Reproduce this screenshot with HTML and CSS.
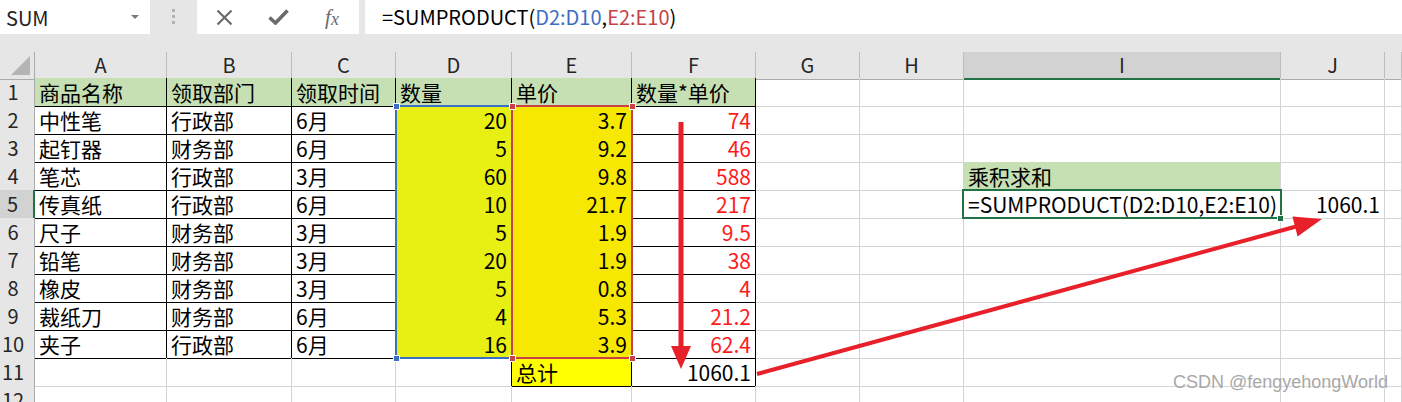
FILE: index.html
```html
<!DOCTYPE html>
<html lang="zh-CN">
<head>
    <meta charset="UTF-8">
    <title>SUMPRODUCT</title>
    <link rel="stylesheet" href="styles.css">
</head>
<body>
    <!-- Formula bar -->
    <div class="formula-bar">
        <div class="name-box"><span>SUM</span><span class="caret"></span></div>
        <div class="grip">
            <svg width="4" height="16" viewBox="0 0 4 16"><rect x="0" y="0" width="3" height="3" fill="#b3b3b3"/><rect x="0" y="6" width="3" height="3" fill="#b3b3b3"/><rect x="0" y="12" width="3" height="3" fill="#b3b3b3"/></svg>
        </div>
        <div class="fx-buttons">
            <span class="btn"><svg width="17" height="17" viewBox="0 0 17 17"><path d="M1.5 1.5L15.5 15.5M15.5 1.5L1.5 15.5" stroke="#6b6b6b" stroke-width="2.2" fill="none"/></svg></span>
            <span class="btn"><svg width="21" height="16" viewBox="0 0 21 16"><path d="M1.5 8.5L7.5 14L19.5 1.5" stroke="#6b6b6b" stroke-width="3.6" fill="none"/></svg></span>
            <span class="btn fx">f<span class="fx-x">x</span></span>
        </div>
        <div class="formula-input">=SUMPRODUCT(<span class="ref-d">D2:D10</span>,<span class="ref-e">E2:E10</span>)</div>
    </div>

    <!-- Sheet -->
    <div class="sheet">
        <div class="row head-row">
            <div class="corner"></div>
            <div class="col-head">A</div><div class="col-head">B</div><div class="col-head">C</div>
            <div class="col-head">D</div><div class="col-head">E</div><div class="col-head">F</div>
            <div class="col-head">G</div><div class="col-head">H</div><div class="col-head active">I</div>
            <div class="col-head">J</div><div class="col-head"></div>
        </div>

        <div class="row">
            <div class="row-head">1</div>
            <div class="cell green b">商品名称</div><div class="cell green b">领取部门</div><div class="cell green b">领取时间</div>
            <div class="cell green b">数量</div><div class="cell green b">单价</div><div class="cell green b">数量*单价</div>
            <div class="cell"></div><div class="cell"></div><div class="cell"></div><div class="cell"></div><div class="cell"></div>
        </div>
        <div class="row">
            <div class="row-head">2</div>
            <div class="cell b">中性笔</div><div class="cell b">行政部</div><div class="cell b">6月</div>
            <div class="cell qty b num">20</div><div class="cell price b num">3.7</div><div class="cell b num red">74</div>
            <div class="cell"></div><div class="cell"></div><div class="cell"></div><div class="cell"></div><div class="cell"></div>
        </div>
        <div class="row">
            <div class="row-head">3</div>
            <div class="cell b">起钉器</div><div class="cell b">财务部</div><div class="cell b">6月</div>
            <div class="cell qty b num">5</div><div class="cell price b num">9.2</div><div class="cell b num red">46</div>
            <div class="cell"></div><div class="cell"></div><div class="cell"></div><div class="cell"></div><div class="cell"></div>
        </div>
        <div class="row">
            <div class="row-head">4</div>
            <div class="cell b">笔芯</div><div class="cell b">行政部</div><div class="cell b">3月</div>
            <div class="cell qty b num">60</div><div class="cell price b num">9.8</div><div class="cell b num red">588</div>
            <div class="cell"></div><div class="cell"></div><div class="cell green">乘积求和</div><div class="cell"></div><div class="cell"></div>
        </div>
        <div class="row">
            <div class="row-head active">5</div>
            <div class="cell b">传真纸</div><div class="cell b">行政部</div><div class="cell b">6月</div>
            <div class="cell qty b num">10</div><div class="cell price b num">21.7</div><div class="cell b num red">217</div>
            <div class="cell"></div><div class="cell"></div><div class="cell formula">=SUMPRODUCT(D2:D10,E2:E10)</div><div class="cell num">1060.1</div><div class="cell"></div>
        </div>
        <div class="row">
            <div class="row-head">6</div>
            <div class="cell b">尺子</div><div class="cell b">财务部</div><div class="cell b">3月</div>
            <div class="cell qty b num">5</div><div class="cell price b num">1.9</div><div class="cell b num red">9.5</div>
            <div class="cell"></div><div class="cell"></div><div class="cell"></div><div class="cell"></div><div class="cell"></div>
        </div>
        <div class="row">
            <div class="row-head">7</div>
            <div class="cell b">铅笔</div><div class="cell b">财务部</div><div class="cell b">3月</div>
            <div class="cell qty b num">20</div><div class="cell price b num">1.9</div><div class="cell b num red">38</div>
            <div class="cell"></div><div class="cell"></div><div class="cell"></div><div class="cell"></div><div class="cell"></div>
        </div>
        <div class="row">
            <div class="row-head">8</div>
            <div class="cell b">橡皮</div><div class="cell b">财务部</div><div class="cell b">3月</div>
            <div class="cell qty b num">5</div><div class="cell price b num">0.8</div><div class="cell b num red">4</div>
            <div class="cell"></div><div class="cell"></div><div class="cell"></div><div class="cell"></div><div class="cell"></div>
        </div>
        <div class="row">
            <div class="row-head">9</div>
            <div class="cell b">裁纸刀</div><div class="cell b">财务部</div><div class="cell b">6月</div>
            <div class="cell qty b num">4</div><div class="cell price b num">5.3</div><div class="cell b num red">21.2</div>
            <div class="cell"></div><div class="cell"></div><div class="cell"></div><div class="cell"></div><div class="cell"></div>
        </div>
        <div class="row">
            <div class="row-head">10</div>
            <div class="cell b">夹子</div><div class="cell b">行政部</div><div class="cell b">6月</div>
            <div class="cell qty b num">16</div><div class="cell price b num">3.9</div><div class="cell b num red">62.4</div>
            <div class="cell"></div><div class="cell"></div><div class="cell"></div><div class="cell"></div><div class="cell"></div>
        </div>
        <div class="row">
            <div class="row-head">11</div>
            <div class="cell"></div><div class="cell"></div><div class="cell"></div>
            <div class="cell br"></div><div class="cell total b">总计</div><div class="cell b num">1060.1</div>
            <div class="cell"></div><div class="cell"></div><div class="cell"></div><div class="cell"></div><div class="cell"></div>
        </div>
        <div class="row">
            <div class="row-head">12</div>
            <div class="cell"></div><div class="cell"></div><div class="cell"></div><div class="cell"></div><div class="cell"></div><div class="cell"></div>
            <div class="cell"></div><div class="cell"></div><div class="cell"></div><div class="cell"></div><div class="cell"></div>
        </div>

        <!-- formula reference boxes -->
        <div class="ref-box blue"></div>
        <div class="ref-box red-box"></div>
        <div class="handle blue" style="left:393px; top:51px"></div>
        <div class="handle blue" style="left:393px; top:303px"></div>
        <div class="handle red-h" style="left:509px; top:51px"></div>
        <div class="handle red-h" style="left:629px; top:51px"></div>
        <div class="handle red-h" style="left:509px; top:303px"></div>
        <div class="handle red-h" style="left:629px; top:303px"></div>

        <!-- active cell -->
        <div class="active-cell"></div>
        <div class="fill-handle"></div>

        <!-- annotation arrows -->
        <svg class="arrows" width="1402" height="350" viewBox="0 0 1402 350">
            <line x1="681" y1="70" x2="681" y2="298" stroke="#e8202a" stroke-width="5"/>
            <polygon points="681,317 671,294 691,294" fill="#e8202a"/>
            <line x1="757" y1="322" x2="1298" y2="174" stroke="#e8202a" stroke-width="4"/>
            <polygon points="1322,167 1297.6,184.5 1292.4,164.5" fill="#e8202a"/>
        </svg>
    </div>

    <div class="watermark">CSDN @fengyehongWorld</div>
</body>
</html>
```

FILE: styles.css
```css
* { box-sizing: border-box; }
body {
    margin: 0;
    width: 1402px;
    height: 402px;
    overflow: hidden;
    position: relative;
    background: #e6e6e6;
    font-family: "Noto Sans CJK SC", sans-serif;
    color: #000;
}

/* formula bar */
.formula-bar { display: flex; height: 34px; margin-bottom: 18px; }
.name-box {
    width: 150px;
    background: #fff;
    display: flex;
    align-items: center;
    justify-content: space-between;
    padding: 0 11px 0 6px;
    font-size: 20px;
    color: #222;
}
.caret {
    width: 0; height: 0;
    border-left: 4px solid transparent;
    border-right: 4px solid transparent;
    border-top: 4px solid #7a7a7a;
}
.grip { width: 47px; display: flex; align-items: center; justify-content: center; }
.fx-buttons {
    width: 162px;
    background: #fff;
    display: grid;
    grid-template-columns: repeat(3, 54px);
    align-items: center;
    justify-items: center;
}
.btn { display: flex; align-items: center; }
.fx {
    font-family: "Liberation Serif", serif;
    font-style: italic;
    font-size: 21px;
    color: #6b6b6b;
}
.fx-x { font-size: 18px; position: relative; top: 2px; }
.formula-input {
    flex: 1;
    margin-left: 6px;
    background: #fff;
    padding-left: 17px;
    font-size: 20px;
    line-height: 34px;
}
.ref-d { color: #3b6fc6; }
.ref-e { color: #c8404a; }

/* sheet */
.sheet { position: relative; background: #fff; }
.row {
    display: grid;
    grid-template-columns: 35px 132px 125px 104px 116px 120px 124px 104px 104px 317px 104px 1fr;
    height: 28px;
}
.head-row { height: 26px; }
.corner {
    background: #e6e6e6;
    border-right: 1px solid #ababab;
    border-bottom: 1px solid #ababab;
    position: relative;
}
.corner::after {
    content: "";
    position: absolute;
    right: 4px; bottom: 4px;
    width: 19px; height: 19px;
    background: #b4b4b4;
    clip-path: polygon(100% 0, 100% 100%, 0 100%);
}
.col-head {
    background: #e6e6e6;
    border-right: 1px solid #bdbdbd;
    border-bottom: 1px solid #ababab;
    text-align: center;
    font-size: 20px;
    line-height: 26px;
    color: #262626;
}
.col-head.active { background: #d2d2d2; border-bottom: 2px solid #217346; }
.row-head {
    background: #e6e6e6;
    border-right: 1px solid #ababab;
    border-bottom: 1px solid #d0d0d0;
    padding-right: 8px;
    text-align: center;
    font-size: 20px;
    line-height: 28px;
    color: #262626;
}
.row-head.active { background: #d2d2d2; border-right: 2px solid #217346; }
.cell {
    border-right: 1px solid #d4d4d4;
    border-bottom: 1px solid #d4d4d4;
    padding: 0 4px;
    font-size: 21px;
    line-height: 28px;
    white-space: nowrap;
}
.cell.b { border-right-color: #000; border-bottom-color: #000; }
.cell.br { border-right-color: #000; }
.num { text-align: right; }
.red { color: #ff1a1a; }
.green { background: #c6e0b4; }
.qty { background: #e8ef13; }
.price { background: #f6e800; }
.total { background: #ffff00; }
.formula { letter-spacing: 0; }

/* overlays */
.ref-box { position: absolute; top: 53px; height: 254px; }
.ref-box.blue { left: 395px; width: 118px; border: 2px solid #3b6fc6; }
.ref-box.red-box { left: 511px; width: 122px; border: 2px solid #c8404a; }
.handle {
    position: absolute;
    width: 7px; height: 7px;
    border: 1px solid #fff;
}
.handle.blue { background: #3b6fc6; }
.handle.red-h { background: #c8404a; }
.active-cell {
    position: absolute;
    left: 962px; top: 137px;
    width: 320px; height: 30px;
    border: 2px solid #217346;
}
.fill-handle {
    position: absolute;
    left: 1277px; top: 163px;
    width: 7px; height: 7px;
    background: #217346;
    border: 1px solid #fff;
}
.arrows { position: absolute; left: 0; top: 0; pointer-events: none; }

.watermark {
    position: absolute;
    right: 14px;
    bottom: 9px;
    font-family: "Liberation Sans", sans-serif;
    font-size: 18px;
    color: #a8a8a8;
    text-shadow: 0 0 2px #fff;
}
```
